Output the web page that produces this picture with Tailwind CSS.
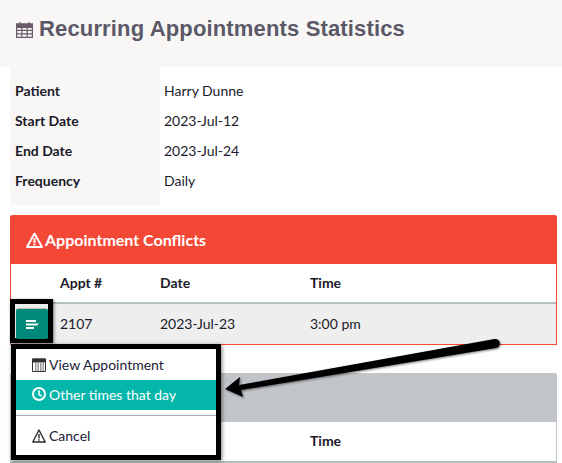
<!DOCTYPE html>
<html><head><meta charset="utf-8"><script src="https://cdn.jsdelivr.net/npm/@tailwindcss/browser@4"></script></head>
<body class="bg-white">
<div class="relative w-[562px] h-[463px] overflow-hidden bg-white font-['Lato',sans-serif] text-[14px] text-[#1a1a2a]">
  <header class="h-[67px] bg-[#f8f7f6] pl-4 pt-[17px] flex items-start gap-[6px] font-['Liberation_Sans',sans-serif] font-bold text-[22px] tracking-[0.15px] leading-[24px] text-[#5b5868]">
    <svg class="w-[17px] h-[17px] mt-[4px]" viewBox="0 0 17 17" fill="none" stroke="#6a5a6a" stroke-width="1.2"><path d="M.6 3h15.800v13.400H.6z"/><path fill="#6a5a6a" d="M.6 3h15.800v3.400H.6z"/><path d="M.6 9.300h15.800M.6 12.800h15.800M5.800 6v10M11.200 6v10M4 1v3M13 1v3"/></svg>
    <h1>Recurring Appointments Statistics</h1>
  </header>
  <main class="px-[10px]">
    <dl class="grid grid-cols-[150px_1fr] grid-rows-[39px_30px_30px_39px]">
      <dt class="bg-[#f8f7f6] pl-[5px] pt-[7px] flex items-center font-bold">Patient</dt><dd class="pl-[4px] pt-[7px] flex items-center">Harry Dunne</dd>
      <dt class="bg-[#f8f7f6] pl-[5px] pb-[2px] flex items-center font-bold">Start Date</dt><dd class="pl-[4px] pb-[2px] flex items-center">2023-Jul-12</dd>
      <dt class="bg-[#f8f7f6] pl-[5px] pb-[2px] flex items-center font-bold">End Date</dt><dd class="pl-[4px] pb-[2px] flex items-center">2023-Jul-24</dd>
      <dt class="bg-[#f8f7f6] pl-[5px] pb-[11px] flex items-center font-bold">Frequency</dt><dd class="pl-[4px] pb-[11px] flex items-center">Daily</dd>
    </dl>
    <section class="mt-[10px] w-[547px] h-[130px] rounded-t-[3px] border border-[#f44837] border-t-0">
      <div class="h-[49px] -mx-px bg-[#f44837] rounded-t-[3px] text-white font-bold text-[16px] flex items-center pl-[16px] gap-[2px]">
        <svg class="w-[17px] h-[16px]" viewBox="0 0 17 16" fill="none" stroke="#fff" stroke-width="2"><path d="M8.500 1.500 1 15h15z" stroke-linejoin="round"/><path d="M8.500 6v5M8.500 11.800v1.800"/></svg>
        <h2>Appointment Conflicts</h2>
      </div>
      <div class="h-[40px] pb-[2px] grid grid-cols-[49px_100px_150px_1fr] items-center font-bold border-b-2 border-[#b5bfbf]"><span></span><span>Appt #</span><span>Date</span><span>Time</span></div>
      <div class="h-[40px] pb-[2px] bg-[#eeeeee] grid grid-cols-[49px_100px_150px_1fr] items-center"><span></span><span>2107</span><span>2023-Jul-23</span><span>3:00 pm</span></div>
    </section>
    <section class="mt-[28px] w-[547px] h-[90px] rounded-t-[3px] border-x border-[#c1c4c8] border-b-2 border-b-[#b5bfbf]">
      <div class="h-[49px] -mx-px bg-[#c1c4c8] rounded-t-[3px]"></div>
      <div class="h-[39px] pb-[2px] grid grid-cols-[299px_1fr] items-center font-bold"><span></span><span>Time</span></div>
    </section>
  </main>

  <div class="absolute left-[10px] top-[299px] w-[43px] h-[44px] border-[5px] border-black shadow-[1px_1px_3px_rgba(0,0,0,.5)]">
    <div class="ml-px mt-[5px] w-[32px] h-[30px] bg-[#00897b] rounded-[2px] flex items-center justify-center shadow-[0_-1px_1px_rgba(0,0,0,.2)]">
      <svg class="w-[13px] h-[9px]" viewBox="0 0 13 9" fill="#fff"><path d="M0 0h10v2H0zM0 3.500h13l-2 2H0zM0 7h8v2H0z"/></svg>
    </div>
  </div>

  <div class="absolute left-[11px] top-[344px] w-[210px] h-[116px] bg-white border-[5px] border-black shadow-[1px_1px_4px_rgba(0,0,0,.5)] text-[14px] text-[#22223a]">
    <div class="h-[31px] flex items-center pl-[16px] gap-[3px]">
      <svg class="w-[14px] h-[15px]" viewBox="0 0 14 15" fill="none" stroke="#333" stroke-width="1"><path d="M.5 2h13v12.500H.5z"/><path fill="#333" d="M.5 2h13v3H.5z"/><path stroke-dasharray="1.500 1" d="M3 7h9M3 9h9M3 11h9M3 13h9"/></svg>
      <span>View Appointment</span>
    </div>
    <div class="h-[30px] pb-[2px] bg-[#04b5aa] text-white flex items-center pl-[16px] gap-[3px]">
      <svg class="w-[14px] h-[14px]" viewBox="0 0 14 14" fill="none" stroke="#fff" stroke-width="2"><circle cx="7" cy="7" r="6"/><path d="M7 3.200V7.500l2.600 1.700" stroke-width="1.600"/></svg>
      <span>Other times that day</span>
    </div>
    <div class="mt-[5px] border-t border-[#a8adad]"></div>
    <div class="h-[41px] pb-[2px] flex items-center pl-[16px] gap-[3px]">
      <svg class="w-[14px] h-[14px]" viewBox="0 0 14 14" fill="none" stroke="#2a2a2a" stroke-width="1.400"><path d="M7 1 .8 13h12.400z" stroke-linejoin="round"/><path d="M7 5v4.500M7 10.300v1.500"/></svg>
      <span>Cancel</span>
    </div>
  </div>

  <svg class="absolute left-[215px] top-[330px] w-[290px] h-[75px] drop-shadow-[1px_1px_1px_rgba(0,0,0,.5)]" viewBox="0 0 290 75"><path d="M24 55 279.500 9a4.500 4.500 0 0 1 1.500 9L26 60z" fill="#000"/><path d="M10 59 25 47 24 55 26 60 28 67z" fill="#000"/></svg>
</div>
</body></html>
